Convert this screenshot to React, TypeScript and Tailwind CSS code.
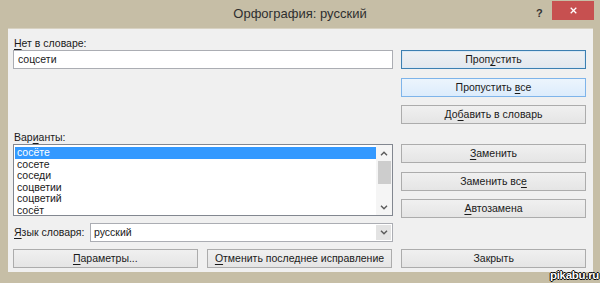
import type { ReactNode } from "react";

const font = "font-['Liberation_Sans','Noto_Sans',sans-serif]";

const variants = ["сосёте", "сосете", "соседи", "соцветии", "соцветий", "сосёт"];

function U({ children }: { children: ReactNode }) {
  return <span className="underline underline-offset-[1.5px] decoration-1">{children}</span>;
}

function Button({
  children,
  kind = "normal",
  className = "",
}: {
  children: ReactNode;
  kind?: "normal" | "focus" | "hover";
  className?: string;
}) {
  const styles: Record<string, string> = {
    normal: "border-[#acacac] bg-gradient-to-b from-[#f0f0f0] to-[#e5e5e5]",
    focus: "border-[#3c7fb1] bg-gradient-to-b from-[#eef1f4] to-[#e3e8ee] shadow-[inset_0_0_0_1px_#d9e8f5]",
    hover: "border-[#7eb4ea] bg-gradient-to-b from-[#ecf4fc] to-[#dcecfc]",
  };
  return (
    <div
      className={`flex h-[19px] items-center justify-center whitespace-nowrap border text-[10.5px] leading-none text-[#1a1a1a] ${styles[kind]} ${className}`}
    >
      {children}
    </div>
  );
}

function Chevron({ up }: { up?: boolean }) {
  return (
    <svg viewBox="0 0 8 5" className="h-[5px] w-[8px]" fill="none" aria-hidden="true">
      <path
        d={up ? "M1 4.2 4 1.2l3 3" : "M1 0.8l3 3 3-3"}
        stroke="#5a5a5a"
        strokeWidth="1.4"
      />
    </svg>
  );
}

export default function App() {
  return (
    <div className={`relative flex h-[283px] w-[600px] flex-col bg-[#c6bea6] ${font}`}>
      {/* title bar */}
      <div className="relative flex h-[28px] items-center justify-center">
        <span className="text-[13px] text-[#2f2f2f]">Орфография: русский</span>
        <span className="absolute left-[536px] top-[5px] text-[11px] font-bold text-[#333]">?</span>
        <div className="absolute left-[552px] top-px flex h-[19px] w-[42px] items-center justify-center bg-[#c75050]">
          <svg viewBox="0 0 10 10" className="h-[7px] w-[7px]" aria-hidden="true">
            <path d="M1 1l8 8M9 1 1 9" stroke="white" strokeWidth="1.8" />
          </svg>
        </div>
      </div>

      {/* client area */}
      <div className="ml-[8px] flex h-[244px] w-[585px] flex-col border-t border-[#d8d2c2] bg-[#f0f0f0] pl-[5px] pr-[7px] text-[10.5px] text-[#1a1a1a]">
        <div className="flex gap-[8px]">
          <div className="flex w-[380px] flex-col">
            <div className="mt-[7px] h-[14px] whitespace-nowrap pl-px leading-[14px]">
              <U>Н</U>ет в словаре:
            </div>
            <div className="flex h-[19px] items-center border border-[#abadb3] bg-white px-[4px]">
              соцсети
            </div>

            <div className="mt-[61px] h-[14px] whitespace-nowrap pl-px leading-[14px]">
              Вар<U>и</U>анты:
            </div>
            <div className="flex h-[72px] border border-[#828790] bg-white">
              <div className="flex-1 overflow-hidden pl-px pt-[2px]">
                {variants.map((v, i) => (
                  <div
                    key={v}
                    className={`h-[11.5px] whitespace-nowrap pl-[2px] leading-[11.5px] ${
                      i === 0 ? "bg-[#3399ff] text-white" : ""
                    }`}
                  >
                    {v}
                  </div>
                ))}
              </div>
              <div className="flex w-[16px] flex-col items-center bg-[#f5f5f5]">
                <div className="flex h-[16px] items-center justify-center">
                  <Chevron up />
                </div>
                <div className="h-[23px] w-[13px] bg-[#cdcdcd]" />
                <div className="flex-1" />
                <div className="flex h-[16px] items-center justify-center">
                  <Chevron />
                </div>
              </div>
            </div>

            <div className="mt-[7px] flex h-[19px] items-center">
              <div className="w-[76px] whitespace-nowrap pl-px">
                <U>Я</U>зык словаря:
              </div>
              <div className="ml-px flex h-[19px] flex-1 items-center border border-[#abadb3] bg-white">
                <span className="flex-1 px-[3px]">русский</span>
                <div className="mr-px flex h-[15px] w-[15px] items-center justify-center bg-[#e3e3e3]">
                  <Chevron />
                </div>
              </div>
            </div>
          </div>

          <div className="flex w-[185px] flex-col">
            <Button kind="focus" className="mt-[21px]">
              Проп<U>у</U>стить
            </Button>
            <Button kind="hover" className="mt-[9px]">
              Пропустить&nbsp;<U>в</U>се
            </Button>
            <Button className="mt-[8px]">
              До<U>б</U>авить в словарь
            </Button>
            <Button className="mt-[20px]">
              <U>З</U>аменить
            </Button>
            <Button className="mt-[9px]">
              Заменить вс<U>е</U>
            </Button>
            <Button className="mt-[8px]">
              <U>А</U>втозамена
            </Button>
          </div>
        </div>

        <div className="mt-[7px] flex gap-[9px]">
          <Button className="w-[185px]">
            <U>П</U>араметры...
          </Button>
          <Button className="w-[186px]">
            <U>О</U>тменить последнее исправление
          </Button>
          <Button className="w-[185px]">Закрыть</Button>
        </div>
      </div>

      <span className="absolute left-[550px] top-[267px] text-[11.5px] font-bold tracking-[-0.3px] text-white [text-shadow:0_0_1px_#000,1px_0_0_#000,-1px_0_0_#000,0_1px_0_#000,0_-1px_0_#000]">
        pikabu.ru
      </span>
    </div>
  );
}
